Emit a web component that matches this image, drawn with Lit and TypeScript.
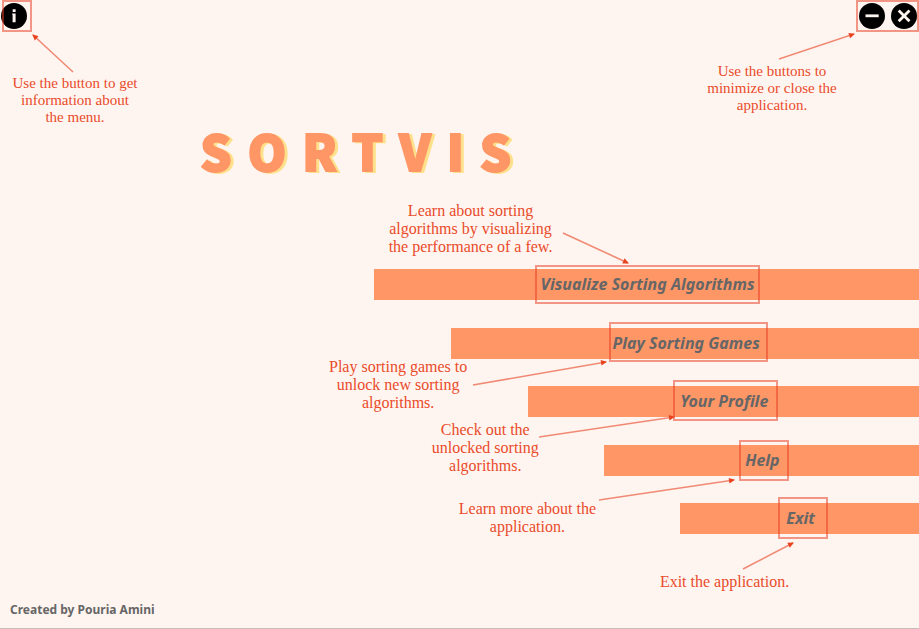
import { LitElement, html, svg, css, nothing } from "lit";
import { customElement } from "lit/decorators.js";
import { styleMap } from "lit/directives/style-map.js";

/* All callout coordinates are measured from the anchor of the control they describe. */
interface Callout {
  text: string;
  centre: number;
  top: number;
  arrow: [number, number, number, number];
  frame: [number, number, number, number];
  compact?: boolean;
}

interface MenuItem {
  label: string;
  share: number;
  note: Callout;
}

const infoNote: Callout = {
  text: "Use the button to get\ninformation about\nthe menu.",
  centre: 75,
  top: 75,
  arrow: [73, 72, 33, 35],
  frame: [2, 0, 30, 32],
  compact: true,
};

const windowNote: Callout = {
  text: "Use the buttons to\nminimize or close the\napplication.",
  centre: -147,
  top: 63,
  arrow: [-140, 59, -65, 34],
  frame: [-63, 0, 63, 32],
  compact: true,
};

const menu: MenuItem[] = [
  {
    label: "Visualize Sorting Algorithms",
    share: 59.3,
    note: {
      text: "Learn about sorting\nalgorithms by visualizing\nthe performance of a few.",
      centre: -176,
      top: -67,
      arrow: [-84, -36, -19, -6],
      frame: [-112, -4, 225, 39],
    },
  },
  {
    label: "Play Sorting Games",
    share: 50.9,
    note: {
      text: "Play sorting games to\nunlock new sorting\nalgorithms.",
      centre: -287,
      top: 30,
      arrow: [-212, 57, -79, 34],
      frame: [-76, -6, 159, 40],
    },
  },
  {
    label: "Your Profile",
    share: 42.6,
    note: {
      text: "Check out the\nunlocked sorting\nalgorithms.",
      centre: -238,
      top: 35,
      arrow: [-184, 51, -49, 31],
      frame: [-50, -6, 105, 41],
    },
  },
  {
    label: "Help",
    share: 34.3,
    note: {
      text: "Learn more about the\napplication.",
      centre: -234,
      top: 55,
      arrow: [-162, 55, -27, 35],
      frame: [-22, -5, 50, 41],
    },
  },
  {
    label: "Exit",
    share: 26,
    note: {
      text: "Exit the application.",
      centre: -75,
      top: 70,
      arrow: [-57, 66, -7, 40],
      frame: [-22, -6, 50, 42],
    },
  },
];

@customElement("call-out")
class CallOut extends LitElement {
  static properties = { note: { attribute: false } };
  declare note?: Callout;

  static styles = css`
    :host {
      position: absolute;
      top: 0;
      width: 0;
      height: 0;
      pointer-events: none;
      z-index: 1;
    }
    .frame {
      position: absolute;
      box-sizing: border-box;
      border: 2px solid rgba(232, 62, 34, 0.52);
    }
    .text {
      position: absolute;
      width: 200px;
      margin: 0 0 0 -100px;
      text-align: center;
      white-space: pre-line;
      font: 16px/18px "Liberation Serif", serif;
      color: #e94b2b;
    }
    .compact {
      font-size: 15px;
      line-height: 17px;
    }
    .arrow {
      position: absolute;
      left: 0;
      top: 0;
      width: 1px;
      height: 1px;
      overflow: visible;
    }
    .shaft {
      stroke: #f08a74;
      stroke-width: 1.6;
    }
    .head {
      fill: #e8431f;
    }
  `;

  render() {
    const n = this.note;
    if (!n) return nothing;
    const [x1, y1, x2, y2] = n.arrow;
    const [x, y, w, h] = n.frame;
    const angle = (Math.atan2(y2 - y1, x2 - x1) * 180) / Math.PI;
    return html`
      <div
        class="frame"
        style=${styleMap({ left: `${x}px`, top: `${y}px`, width: `${w}px`, height: `${h}px` })}
      ></div>
      <svg class="arrow" aria-hidden="true">
        ${svg`<line class="shaft" x1=${x1} y1=${y1} x2=${x2} y2=${y2}></line>
        <path class="head" d="M1 0L-5 -2.8V2.8Z" transform="translate(${x2} ${y2}) rotate(${angle})"></path>`}
      </svg>
      <p
        class="text ${n.compact ? "compact" : ""}"
        style=${styleMap({ left: `${n.centre}px`, top: `${n.top}px` })}
      >${n.text}</p>
    `;
  }
}

@customElement("app-root")
class AppRoot extends LitElement {
  static styles = css`
    :host {
      display: flex;
      flex-direction: column;
      box-sizing: border-box;
      min-height: 100vh;
      overflow: hidden;
      background: #fff5f0;
      border-bottom: 1px solid #c9bdbb;
      font-family: "Noto Sans", sans-serif;
      color: #666;
    }
    .bar {
      position: relative;
      display: flex;
      justify-content: space-between;
      padding: 3px 2px 3px 1px;
    }
    .group {
      display: flex;
      gap: 6px;
    }
    .round {
      width: 26px;
      height: 26px;
      padding: 0;
      border: 0;
      border-radius: 50%;
      background: #000;
      cursor: pointer;
    }
    .round svg {
      display: block;
      width: 26px;
      height: 26px;
    }
    .at-left {
      left: 0;
    }
    .at-right {
      left: 100%;
    }
    .title {
      margin: 88px 0 0;
      padding-left: 21.8%;
      font: 900 49px/60px "Noto Sans CJK JP", sans-serif;
      letter-spacing: 16px;
      color: #ff9666;
      -webkit-text-stroke: 2px #ff9666;
      filter: drop-shadow(3px 1px 0 #ffe08a);
    }
    .menu {
      display: flex;
      flex-direction: column;
      align-items: flex-end;
      justify-content: space-between;
      height: 265px;
      margin: 89px 0 0;
      padding: 0;
      list-style: none;
    }
    .row {
      position: relative;
    }
    .item {
      display: block;
      width: 100%;
      height: 31px;
      padding: 0 0 0 2px;
      border: 0;
      background: #ff9666;
      font: italic bold 16px/31px "Noto Sans", sans-serif;
      color: #666;
      text-align: center;
      cursor: pointer;
    }
    .at-centre {
      left: 50%;
    }
    .foot {
      margin-top: auto;
      padding: 8px 10px 10px;
      font-size: 12px;
      line-height: 16px;
      font-weight: bold;
    }
  `;

  render() {
    return html`
      <header class="bar">
        <button class="round" aria-label="Information">
          <svg viewBox="0 0 26 26" fill="#fff5f0">
            <path d="M11.7 6.2h2.9v2.7h-2.9zM11.2 10.4h3.4v8.8h-3v-7.4h-.4z" />
          </svg>
        </button>
        <div class="group">
          <button class="round" aria-label="Minimize">
            <svg viewBox="0 0 26 26" fill="#fff5f0"><path d="M6.5 11.4h13.2v2.8H6.5z" /></svg>
          </button>
          <button class="round" aria-label="Close">
            <svg viewBox="0 0 26 26" fill="none" stroke="#fff5f0" stroke-width="2.8">
              <path d="M7.7 7.5l10.8 10.8M18.5 7.5L7.7 18.3" />
            </svg>
          </button>
        </div>
        <call-out class="at-left" .note=${infoNote}></call-out>
        <call-out class="at-right" .note=${windowNote}></call-out>
      </header>
      <h1 class="title">SORTVIS</h1>
      <ul class="menu">
        ${menu.map(
          (m) => html`
            <li class="row" style=${styleMap({ width: `${m.share}%` })}>
              <button class="item">${m.label}</button>
              <call-out class="at-centre" .note=${m.note}></call-out>
            </li>
          `,
        )}
      </ul>
      <footer class="foot">Created by Pouria Amini</footer>
    `;
  }
}
